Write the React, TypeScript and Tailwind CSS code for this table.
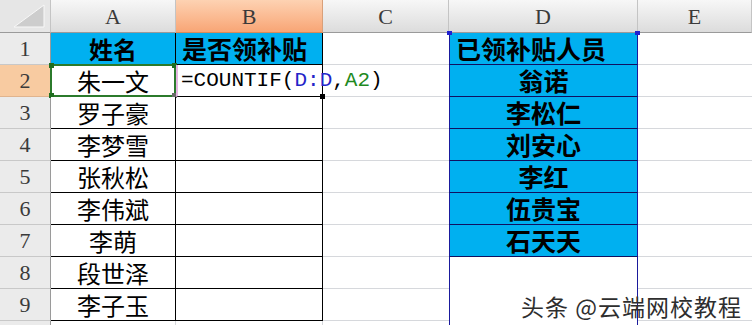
import React from "react";

// 列幅・行高はスクリーンショットから実測
const COLS = ["A", "B", "C", "D", "E"];
const ROWS = [1, 2, 3, 4, 5, 6, 7, 8, 9, 10];

const NAMES = ["姓名", "朱一文", "罗子豪", "李梦雪", "张秋松", "李伟斌", "李萌", "段世泽", "李子玉"];
const GOT = ["已领补贴人员", "翁诺", "李松仁", "刘安心", "李红", "伍贵宝", "石天天"];

const CJK = "font-['SimSun','Noto_Sans_CJK_SC',sans-serif]";

function Corner() {
  return (
    <div className="relative border-r border-b border-r-[#c4c4c4] border-b-[#9a9a9a] bg-[#e6e6e6]">
      <svg className="absolute inset-0" width="50" height="32" viewBox="0 0 50 32">
        <polygon points="44,5 44,27 14,27" fill="#cdcdcd" stroke="#f8f8f8" strokeWidth="1" />
      </svg>
    </div>
  );
}

function ColHead({ label }: { label: string }) {
  const selected = label === "B";
  return (
    <div
      className={`flex items-center justify-center border-r border-b font-['Liberation_Serif',serif] text-[22px] text-[#3a3a3a] ${
        selected
          ? "bg-linear-to-b from-[#fdd2b2] to-[#f8a575] border-r-[#d9a07a] border-b-[#d98a58]"
          : "bg-linear-to-b from-[#f7f7f7] to-[#dcdcdc] border-r-[#c4c4c4] border-b-[#9a9a9a]"
      }`}
    >
      {label}
    </div>
  );
}

function RowHead({ n }: { n: number }) {
  const selected = n === 2;
  return (
    <div
      className={`flex items-center justify-center border-r border-b font-['Liberation_Serif',serif] text-[22px] text-[#3a3a3a] ${
        selected
          ? "bg-[#f8cba1] border-r-[#d98a58] border-b-[#e0b48e]"
          : "bg-[#ebebeb] border-r-[#9a9a9a] border-b-[#c8c8c8]"
      }`}
    >
      {n}
    </div>
  );
}

function Formula() {
  return (
    <span className="whitespace-nowrap font-['Liberation_Mono',monospace] text-[21px] text-black">
      =COUNTIF(<span className="text-[#2424c8]">D:D</span>,<span className="text-[#1f8a1f]">A2</span>)
    </span>
  );
}

function Cell({ col, row }: { col: string; row: number }) {
  if (col === "A") {
    const text = NAMES[row - 1] ?? "";
    if (row === 10) return <div className="border-r border-b border-[#d6d8dc]" />;
    return (
      <div
        className={`relative flex items-center justify-center border-r border-b border-black ${CJK} text-[24px] leading-none ${
          row === 1 ? "bg-[#00b0f0] font-bold" : "bg-white"
        }`}
      >
        {text}
        {row === 2 && (
          <div className="pointer-events-none absolute -top-px -left-px -right-px -bottom-px border-2 border-[#2b7a2b]">
            <span className="absolute -top-[3px] -left-[3px] h-[5px] w-[5px] bg-[#1f6e1f]" />
            <span className="absolute -top-[3px] -right-[3px] h-[5px] w-[5px] bg-[#1f6e1f]" />
            <span className="absolute -bottom-[3px] -left-[3px] h-[5px] w-[5px] bg-[#1f6e1f]" />
            <span className="absolute -bottom-[3px] -right-[3px] h-[5px] w-[5px] bg-[#6a6a6a]" />
          </div>
        )}
      </div>
    );
  }
  if (col === "B") {
    if (row === 10) return <div className="border-r border-b border-[#d6d8dc]" />;
    if (row === 1)
      return (
        <div className={`flex items-center border-r border-b border-black bg-[#00b0f0] pl-[6px] ${CJK} text-[25px] font-bold leading-none`}>
          是否领补贴
        </div>
      );
    if (row === 2)
      return (
        <div className="relative z-10 flex items-center overflow-visible border-r border-b border-black border-l-2 border-l-[#e4b4e0] bg-white pl-[3px]">
          <Formula />
          <span className="absolute -right-[3px] -bottom-[3px] h-[5px] w-[5px] bg-black" />
        </div>
      );
    return <div className="border-r border-b border-black bg-white" />;
  }
  if (col === "C") {
    return <div className="border-b border-[#d6d8dc] bg-white" />;
  }
  if (col === "D") {
    const text = GOT[row - 1];
    if (text !== undefined) {
      return (
        <div
          className={`relative flex items-center border-x border-x-[#1a1a9c] border-b border-b-[#101060] bg-[#00b0f0] ${CJK} text-[25px] font-bold leading-none ${
            row === 1 ? "pl-[6px]" : "justify-center"
          }`}
        >
          {text}
          {row === 1 && (
            <>
              <span className="absolute -top-[2px] -left-[3px] h-[4px] w-[5px] bg-[#2020d0]" />
              <span className="absolute -top-[2px] -right-[3px] h-[4px] w-[5px] bg-[#2020d0]" />
            </>
          )}
        </div>
      );
    }
    return <div className="border-x border-x-[#1a1a9c] bg-white" />;
  }
  return <div className="border-b border-[#d6d8dc] bg-white" />;
}

export default function App() {
  return (
    <div className="relative h-[325px] w-[752px] overflow-hidden bg-white">
      <div className="grid grid-cols-[51px_125px_147px_126px_189px_114px] grid-rows-[33px_repeat(10,32px)]">
        <Corner />
        {COLS.map((c) => (
          <ColHead key={c} label={c} />
        ))}
        {ROWS.map((r) => (
          <React.Fragment key={r}>
            <RowHead n={r} />
            {COLS.map((c) => (
              <Cell key={c + r} col={c} row={r} />
            ))}
          </React.Fragment>
        ))}
      </div>

      {/* 透かし */}
      <div className="pointer-events-none absolute right-[10px] bottom-[7px] z-20 whitespace-nowrap font-['Noto_Sans_CJK_SC',sans-serif] text-[23px] leading-none tracking-[1px] text-[#2e2e2e]">
        头条 @云端网校教程
      </div>
    </div>
  );
}
